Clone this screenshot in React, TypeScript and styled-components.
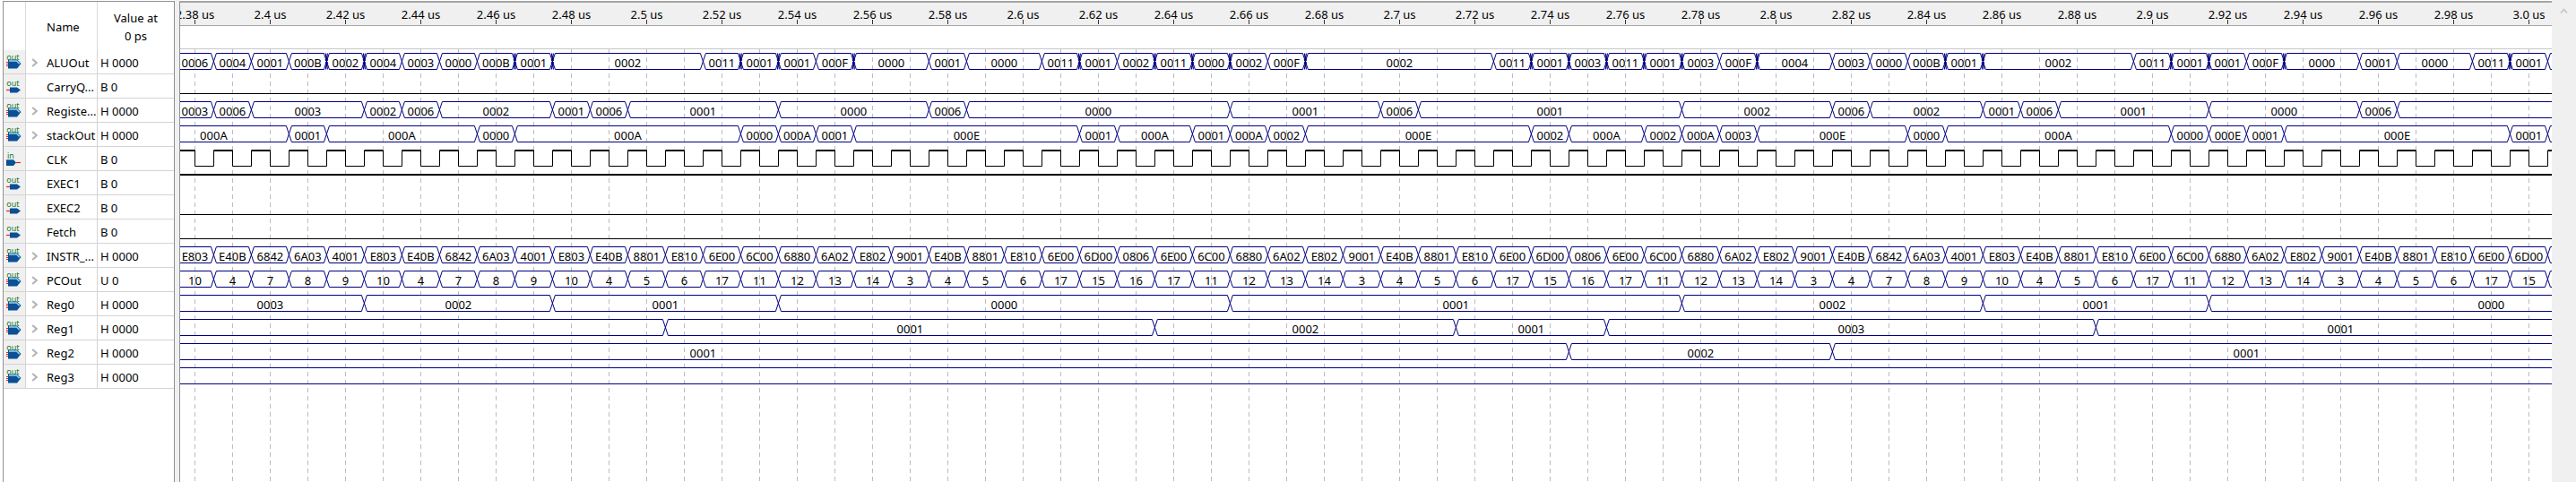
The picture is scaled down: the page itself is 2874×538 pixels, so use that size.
import React from "react";
import styled, { createGlobalStyle } from "styled-components";

const GlobalStyle = createGlobalStyle`
  html, body {
    margin: 0;
    padding: 0;
    background: #fff;
  }
`;

const WAVE_LEFT = 201; // first pixel inside the wave panel
const WAVE_WIDTH = 2646;
const CYCLE = 42;
const FIRST_GRID = 217.4;
const FIRST_RISE = 238.4;
const NAVY = "#000080";

const edgeX = (k: number) => FIRST_RISE + CYCLE * k - WAVE_LEFT;
const snap = (x: number) => Math.floor(x) + 0.5;

type Wave =
  | { type: "bus"; start?: number; runs: string }
  | { type: "low" }
  | { type: "high" }
  | { type: "clock" };

type Signal = {
  name: string;
  value: string;
  kind: "bus" | "out" | "in";
  wave: Wave;
};

// tokens: value, *n = cycles it holds, ! = skewed (glitchy) edge at its end, - = no label
const signals: Signal[] = [
  {
    name: "ALUOut",
    value: "H 0000",
    kind: "bus",
    wave: {
      type: "bus",
      runs: "0006 0004 0001 000B! 0002! 0004 0003 0000 000B! 0001! 0002*4 0011! 0001! 0001 000F! 0000*2 0001 0000*2 0011! 0001 0002! 0011! 0000! 0002 000F! 0002*5 0011! 0001! 0003! 0011! 0001! 0003 000F! 0004*2 0003 0000 000B! 0001! 0002*4 0011! 0001! 0001 000F! 0000*2 0001 0000*2 0011! 0001 -*3",
    },
  },
  { name: "CarryQ...", value: "B 0", kind: "out", wave: { type: "low" } },
  {
    name: "Registe...",
    value: "H 0000",
    kind: "bus",
    wave: {
      type: "bus",
      runs: "0003 0006 0003*3 0002 0006 0002*3 0001 0006 0001*4 0000*4 0006 0000*7 0001*4 0006 0001*7 0002*4 0006 0002*3 0001 0006 0001*4 0000*4 0006 -*10",
    },
  },
  {
    name: "stackOut",
    value: "H 0000",
    kind: "bus",
    wave: {
      type: "bus",
      start: -2,
      runs: "000A*4 0001 000A*4 0000 000A*6 0000 000A 0001 000E*6 0001 000A*2 0001 000A 0002 000E*6 0002 000A*2 0002 000A 0003 000E*4 0000 000A*6 0000 000E 0001 000E*6 0001 -*3",
    },
  },
  { name: "CLK", value: "B 0", kind: "in", wave: { type: "clock" } },
  { name: "EXEC1", value: "B 0", kind: "out", wave: { type: "high" } },
  { name: "EXEC2", value: "B 0", kind: "out", wave: { type: "low" } },
  { name: "Fetch", value: "B 0", kind: "out", wave: { type: "low" } },
  {
    name: "INSTR_...",
    value: "H 0000",
    kind: "bus",
    wave: {
      type: "bus",
      runs: "E803 E40B 6842 6A03 4001 E803 E40B 6842 6A03 4001 E803 E40B 8801 E810 6E00 6C00 6880 6A02 E802 9001 E40B 8801 E810 6E00 6D00 0806 6E00 6C00 6880 6A02 E802 9001 E40B 8801 E810 6E00 6D00 0806 6E00 6C00 6880 6A02 E802 9001 E40B 6842 6A03 4001 E803 E40B 8801 E810 6E00 6C00 6880 6A02 E802 9001 E40B 8801 E810 6E00 6D00 -*3",
    },
  },
  {
    name: "PCOut",
    value: "U 0",
    kind: "bus",
    wave: {
      type: "bus",
      runs: "10 4 7 8 9 10 4 7 8 9 10 4 5 6 17 11 12 13 14 3 4 5 6 17 15 16 17 11 12 13 14 3 4 5 6 17 15 16 17 11 12 13 14 3 4 7 8 9 10 4 5 6 17 11 12 13 14 3 4 5 6 17 15 -*3",
    },
  },
  {
    name: "Reg0",
    value: "H 0000",
    kind: "bus",
    wave: { type: "bus", runs: "0003*5 0002*5 0001*6 0000*12 0001*12 0002*8 0001*6 0000*15" },
  },
  {
    name: "Reg1",
    value: "H 0000",
    kind: "bus",
    wave: { type: "bus", runs: "-*13 0001*13 0002*8 0001*4 0003*13 0001*13" },
  },
  {
    name: "Reg2",
    value: "H 0000",
    kind: "bus",
    wave: { type: "bus", start: -10, runs: "0001*46 0002*7 0001*22" },
  },
  { name: "Reg3", value: "H 0000", kind: "bus", wave: { type: "bus", runs: "-*70" } },
];

const Page = styled.div`
  display: flex;
  width: 2874px;
  height: 538px;
  overflow: hidden;
  padding-left: 3px;
  box-sizing: border-box;
  font-family: "Noto Sans", "Open Sans", sans-serif;
  color: #000;
`;

const NamePanel = styled.div`
  flex: none;
  width: 192px;
  margin-top: 1px;
  box-sizing: border-box;
  border: 1px solid #8d9297;
  border-bottom: none;
`;

const HeaderRow = styled.div`
  display: grid;
  grid-template-columns: 25px 80px 85px;
  height: 54px;
  font-size: 13px;
`;

const HeaderCell = styled.div<{ $center?: boolean }>`
  display: flex;
  flex-direction: column;
  justify-content: center;
  align-items: ${(p) => (p.$center ? "center" : "flex-start")};
  padding-left: ${(p) => (p.$center ? "0" : "23px")};
  padding-top: 2px;
  line-height: 20px;
`;

const HeaderGap = styled.div`
  border-right: 1px solid #dcdcdc;
`;

const NameHead = styled(HeaderCell)`
  border-right: 1px solid #dcdcdc;
`;

const SignalRow = styled.div`
  display: grid;
  grid-template-columns: 25px 80px 85px;
  height: 27px;
  box-sizing: border-box;
  border-bottom: 1px solid #d4d4d4;
  font-size: 13px;
`;

const IconCell = styled.div`
  background: #f0f0f0;
  border-right: 1px solid #d4d4d4;
`;

const NameCell = styled.div`
  display: flex;
  align-items: center;
  position: relative;
  padding: 2px 0 0 23px;
  border-right: 1px solid #d4d4d4;
  white-space: nowrap;
`;

const ValueCell = styled.div`
  display: flex;
  align-items: center;
  padding: 2px 0 0 3px;
  white-space: nowrap;
`;

const Chevron = styled.svg`
  position: absolute;
  left: 6px;
  top: 9px;
`;

const PortIcon = styled.svg`
  display: block;
`;

const PortText = styled.text`
  font-family: "Noto Sans", sans-serif;
  font-size: 9px;
  fill: #1d7a2c;
`;

const Splitter = styled.div`
  flex: none;
  width: 5px;
  background: #f0f0f0;
`;

const WavePanel = styled.div`
  flex: none;
  width: ${WAVE_WIDTH + 1}px;
  box-sizing: border-box;
  border-left: 1px solid #8d9297;
  border-top: 2px solid #a4a4a4;
  margin-top: 1px;
  height: 537px;
`;

const Ruler = styled.svg`
  display: block;
  background: #f0f0f0;
  border-bottom: 1px solid #a6a6a6;
`;

const RulerText = styled.text`
  font-family: "Noto Sans", sans-serif;
  font-size: 13px;
  fill: #000;
  text-anchor: middle;
`;

const BlankStrip = styled.div`
  height: 25px;
  border-bottom: 1px solid #c8c8c8;
`;

const WaveArea = styled.div`
  position: relative;
  height: 483px;
`;

const GridLayer = styled.svg`
  position: absolute;
  left: 0;
  top: 0;
`;

const WaveSvg = styled.svg`
  display: block;
  position: relative;
`;

const BusLabel = styled.text`
  font-family: "Noto Sans", sans-serif;
  font-size: 13px;
  fill: #000;
  text-anchor: middle;
`;

const ScrollTrack = styled.div`
  flex: none;
  width: 27px;
  background: #f0f0f0;
  display: flex;
  justify-content: center;
  padding-top: 9px;
  box-sizing: border-box;
`;

const BusIcon = () => (
  <PortIcon width="24" height="26" viewBox="0 0 24 26">
    <path d="M5 10.5h10l4.5 4.5-4.5 5.5H5z" fill="#0b4f94" />
    <path d="M6 12h8.5l3.2 3.2" fill="none" stroke="#8fd6f4" strokeWidth="1.4" />
    <path d="M3 13.5h2M3 15.5h2M3 17.5h2" stroke="#e0262a" strokeWidth="1" />
    <PortText x="3.2" y="11">out</PortText>
  </PortIcon>
);

const OutIcon = () => (
  <PortIcon width="24" height="26" viewBox="0 0 24 26">
    <path d="M3 17.5h4.5" stroke="#e0262a" strokeWidth="1.2" />
    <path d="M7 14.5h8l4 3-4 3H7z" fill="#0b4f94" />
    <PortText x="3.2" y="12.5">out</PortText>
  </PortIcon>
);

const InIcon = () => (
  <PortIcon width="24" height="26" viewBox="0 0 24 26">
    <path d="M3 14.3h8l3 3.2-3 3.5H3z" fill="#0b4f94" />
    <path d="M14 17.5h5" stroke="#e0262a" strokeWidth="1.2" />
    <PortText x="4" y="12.5">in</PortText>
  </PortIcon>
);

const ExpandArrow = () => (
  <Chevron width="8" height="10" viewBox="0 0 8 10">
    <path d="M1.2 1l4.6 4-4.6 4" fill="none" stroke="#b2b2b2" strokeWidth="2" />
  </Chevron>
);

const BusWave = ({ start = -1, runs }: { start?: number; runs: string }) => {
  const top = 4.5;
  const bottom = 22.5;
  const lines: string[] = [];
  const glitches: string[] = [];
  const labels: { x: number; text: string }[] = [];
  let edge = start;

  runs.split(" ").forEach((token) => {
    const glitch = token.endsWith("!");
    const [value, count] = token.replace("!", "").split("*");
    const next = edge + Number(count || 1);
    const x0 = edgeX(edge);
    const x1 = edgeX(next);
    lines.push(`M${x0 + 3} ${top}H${x1 - 3}M${x0 + 3} ${bottom}H${x1 - 3}`);
    lines.push(`M${x1 - 3} ${top}L${x1 + 3} ${bottom}M${x1 - 3} ${bottom}L${x1 + 3} ${top}`);
    if (glitch) {
      glitches.push(`M${x1 - 1} ${top}L${x1 + 1} ${bottom}M${x1 - 1} ${bottom}L${x1 + 1} ${top}`);
      glitches.push(`M${x1 - 1.5} 11.5L${x1 + 1.5} 15.5M${x1 - 1.5} 15.5L${x1 + 1.5} 11.5`);
    }
    if (value !== "-") labels.push({ x: (x0 + x1) / 2, text: value });
    edge = next;
  });

  return (
    <WaveSvg width={WAVE_WIDTH} height="27" viewBox={`0 0 ${WAVE_WIDTH} 27`}>
      <path d={lines.join("")} fill="none" stroke={NAVY} strokeWidth="1" />
      <path d={glitches.join("")} fill="none" stroke={NAVY} strokeWidth="1.1" />
      {labels.map((l, i) => (
        <BusLabel key={i} x={l.x} y="20">
          {l.text}
        </BusLabel>
      ))}
    </WaveSvg>
  );
};

const LevelWave = ({ high }: { high?: boolean }) => (
  <WaveSvg width={WAVE_WIDTH} height="27" viewBox={`0 0 ${WAVE_WIDTH} 27`}>
    <path
      d={high ? `M0 5H${WAVE_WIDTH}` : `M0 22.5H${WAVE_WIDTH}`}
      stroke="#000"
      strokeWidth={high ? 2 : 1}
    />
  </WaveSvg>
);

const ClockWave = () => {
  let edges = "M0 5";
  let tops = "M0 5";
  for (let k = 0; k < 64; k++) {
    const fall = snap(FIRST_GRID + CYCLE * k - WAVE_LEFT);
    const rise = snap(FIRST_RISE + CYCLE * k - WAVE_LEFT);
    if (fall > WAVE_WIDTH) break;
    edges += `H${fall}V22.5H${rise}V5`;
    tops += `H${fall}M${rise} 5`;
  }
  return (
    <WaveSvg width={WAVE_WIDTH} height="27" viewBox={`0 0 ${WAVE_WIDTH} 27`}>
      <path d={edges} fill="none" stroke="#000" strokeWidth="1" />
      <path d={tops + `H${WAVE_WIDTH}`} fill="none" stroke="#000" strokeWidth="2" />
    </WaveSvg>
  );
};

const rulerLabel = (k: number) => {
  const t = 2.38 + 0.02 * k;
  if (k === 31) return "3.0 us";
  return `${parseFloat(t.toFixed(2))} us`;
};

const TimeRuler = () => (
  <Ruler width={WAVE_WIDTH} height="25" viewBox={`0 0 ${WAVE_WIDTH} 25`}>
    {Array.from({ length: 32 }, (_, k) => {
      const x = snap(FIRST_GRID + 84 * k - WAVE_LEFT);
      return (
        <g key={k}>
          <RulerText x={x} y="18">
            {rulerLabel(k)}
          </RulerText>
          <path d={`M${x} 19V24`} stroke="#333" strokeWidth="1" />
        </g>
      );
    })}
  </Ruler>
);

const GridLines = () => (
  <GridLayer width={WAVE_WIDTH} height="483" viewBox={`0 0 ${WAVE_WIDTH} 483`}>
    {Array.from({ length: 63 }, (_, k) => {
      const x = snap(FIRST_GRID + CYCLE * k - WAVE_LEFT);
      return <path key={k} d={`M${x} 0V483`} stroke="#bcbcbc" strokeDasharray="5 4" />;
    })}
  </GridLayer>
);

const WaveRow = ({ wave }: { wave: Wave }) => {
  if (wave.type === "bus") return <BusWave start={wave.start} runs={wave.runs} />;
  if (wave.type === "clock") return <ClockWave />;
  return <LevelWave high={wave.type === "high"} />;
};

const App = () => {
  return (
    <>
      <GlobalStyle />
      <Page>
        <NamePanel>
          <HeaderRow>
            <HeaderGap />
            <NameHead>Name</NameHead>
            <HeaderCell $center>
              <span>Value at</span>
              <span>0 ps</span>
            </HeaderCell>
          </HeaderRow>
          {signals.map((s) => (
            <SignalRow key={s.name}>
              <IconCell>
                {s.kind === "bus" && <BusIcon />}
                {s.kind === "out" && <OutIcon />}
                {s.kind === "in" && <InIcon />}
              </IconCell>
              <NameCell>
                {s.kind === "bus" && <ExpandArrow />}
                {s.name}
              </NameCell>
              <ValueCell>{s.value}</ValueCell>
            </SignalRow>
          ))}
        </NamePanel>
        <Splitter />
        <WavePanel>
          <TimeRuler />
          <BlankStrip />
          <WaveArea>
            <GridLines />
            {signals.map((s) => (
              <WaveRow key={s.name} wave={s.wave} />
            ))}
          </WaveArea>
        </WavePanel>
        <ScrollTrack>
          <svg width="9" height="7" viewBox="0 0 9 7">
            <path d="M1 5.5l3.5-4 3.5 4" fill="none" stroke="#c4c4c4" strokeWidth="1.6" />
          </svg>
        </ScrollTrack>
      </Page>
    </>
  );
};

export default App;
